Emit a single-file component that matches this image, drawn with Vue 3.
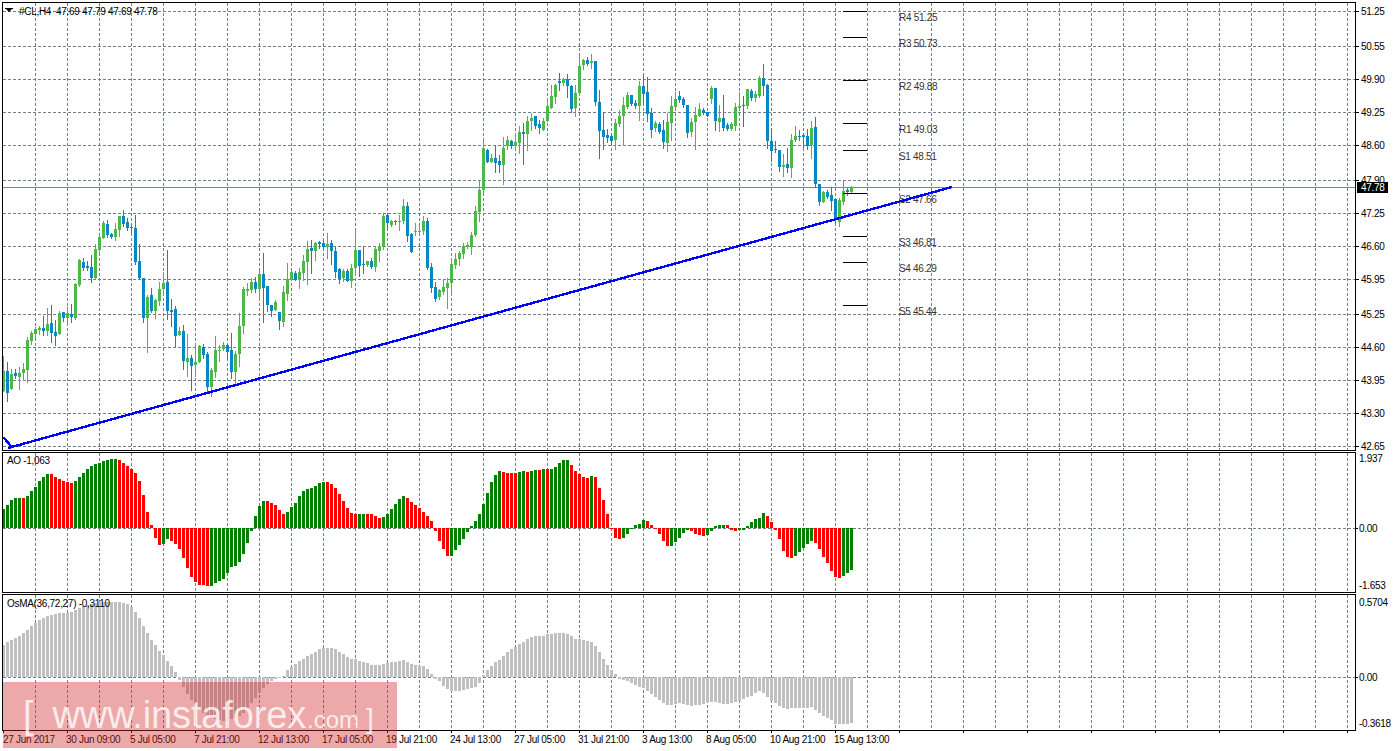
<script setup>
const candleSegments = [
  [205, `g452,498,558,558 b470,498,564,588 g491,507,552,552 b491,504,513,519 g486,504,516,552 g474,492,504,525 g395,405,495,530 g378,384,408,417 g366,372,387,396 g363,369,375,387
b333,369,378,390 g309,357,378,390 b300,354,384,411 b345,381,393,420 g318,324,387,387 b321,321,339,348 g306,324,339,360 b297,327,336,351 g234,237,339,342 g162,165,240,243
b159,171,189,195 b168,183,189,195 b150,186,219,231 g117,132,219,222 g90,96,135,141 g48,54,99,99 b45,57,90,96 b84,87,96,99 g54,72,96,105 g33,33,75,93
b15,33,57,63 b39,51,69,75 b57,66,69,84 b30,69,171,177 b117,168,219,222 b219,219,339,351 g270,276,339,441 b249,270,318,321 g282,285,318,339 g231,252,288,300
g201,234,252,267 b135,231,318,342 b282,315,321,363 b303,312,393,423 g366,378,390,390 b360,378,468,492 g387,459,471,513 b450,459,483,555 g417,471,480,513 g420,423,471,471
b417,426,450,459 b441,447,546,564 g489,495,546,573 g393,435,501,516 g420,435,438,468 g411,420,432,435 b417,420,441,462 b384,435,501,519 g438,447,501,540 g324,363,447,483
g246,252,363,384 g234,252,258,270 g219,231,255,261 b216,231,252,261 g198,207,252,282 b144,207,249,351 b243,243,300,318 b300,300,318,333 g285,291,315,315 b321,321,348,372 g243,261,351,363`],
  [140, `g369,417,462,480 g390,396,420,420 b393,399,420,420 g384,396,420,444 g345,363,399,420 g303,327,366,432 b300,324,333,399 g306,309,333,360 b303,306,312,324
b303,309,320,324 g279,312,320,354 b300,309,333,372 b321,333,396,411 b384,387,417,429 g387,393,414,423 b387,393,423,423 g372,384,423,441 g271,330,384,405 b330,330,378,408
b318,372,375,399 g363,363,375,378 b354,363,381,384 g318,327,381,393 g309,318,333,363 g222,228,321,327 b219,225,249,261 g240,243,255,258 b240,244,247,252 g225,243,246,270
g177,198,243,249 b186,198,288,303 b279,282,336,336 g249,273,276,285 g255,273,276,285 g228,243,273,282 b234,243,384,387 b369,381,444,456 b426,441,477,483 g447,450,471,477
g420,441,456,462 g414,429,444,504 g354,372,429,465 g339,357,375,384 g333,339,357,375 g309,318,342,354 g306,315,321,324 g276,285,321,342 g198,213,285,288 g120,150,216,243
g3,24,150,156 b27,30,66,66 g42,54,66,66 b18,54,69,96 b45,63,75,96 g-10,24,75,132`],
  [40, `g288,300,318,327 b300,303,318,324 g282,306,318,330 g258,276,309,339 b249,276,282,372 g228,243,282,330 g219,234,243,270 b228,228,258,264 b240,252,264,279 g234,243,270,270
g180,198,243,243 g135,168,204,204 g132,135,171,189 b99,123,129,150 g114,117,129,135 b102,117,138,171`],
  [50, `b105,108,177,186 g105,129,174,198 g12,48,129,135 g27,30,45,57 b21,30,42,45 g12,33,39,54 b33,33,156,165 b120,156,243,324 b186,240,261,297 b237,255,264,276
b252,258,273,282 g207,219,270,297 g180,198,222,228 g141,165,198,285 g126,135,171,174 b135,135,162,165 b150,159,168,174 g93,108,168,210 b75,108,132,156 b81,126,192,213
b174,189,240,261 g213,219,234,243 b216,222,246,249 b210,240,276,294 g189,216,279,303 g138,168,219,270 g126,147,171,174 b123,138,150,156 b141,147,165,171 b165,165,249,261
g204,216,246,258 g171,195,216,297 g159,177,198,198 b174,180,189,192 b186,186,198,198 g108,114,147,159 b114,114,213,240 g165,204,216,243 b135,204,234,240 b219,225,237,240
g216,222,237,240 g159,171,228,240 g126,168,174,174 b138,165,168,228 g117,117,168,174 b117,123,144,150 g123,132,144,153 g78,84,138,141 b42,84,108,135 b102,105,273,294
b237,273,303,333 b273,297,300,306 b300,300,351,363 g312,345,351,378 b294,342,354,366 g252,270,354,381 g228,258,270,273 b240,258,261,270 b249,255,261,291 b237,258,288,297
g213,234,285,324 b201,231,402,411 b402,402,456,465 g423,426,456,456 b420,426,441,444 b411,435,453,480 b447,447,510,516 g444,450,516,528 g393,423,456,462 b414,420,426,435 g408,411,426,426`]
]

const candles = candleSegments.flatMap(([off, text]) =>
  text.trim().split(/\s+/).map(token => {
    const [high, top, bottom, low] = token.slice(1).split(',').map(v => Math.round(off + Number(v) / 3))
    return { up: token[0] === 'g', high, top, bottom, low }
  })
).map((c, i) => ({ ...c, x: 2 + 4 * i }))

const aoText = `g192 g180 g165 g159 g159 r159 g153 g138 g126 g108 g96 g87 r87 r96 r102 r108 r111 r114 g108 g96 g84 g72 g63 g57 g54 g48 g45 g42 g42 r45 r54 r63 r72 r84 r108 r150 r201 r240
r278 r300 g297 g282 r288 r297 r312 r339 r369 r396 r411 r420 r420 r423 g423 g414 g408 g402 g384 g366 g363 g351 g327 g294 g258
g213 g183 g168 r168 r174 r180 r195 r207 g201 g186 g174 g153 g138 g132 g129 g123 g114 g111 r111 r117 r129 r147 r168 r189 r204 r207 g207 g207 r207 r207 r213 r219 g216 g207 g192 g177 g162 g153
r159 r171 r180 r189 r201 r213 r228 r258 r288 r312 r333 g333 g315 g300
g282 g261 g243 g228 g207 g177 g144 g111 g90 g78 r81 r84 r84 r84 g81 g78 r81 g78 g75 r75 g72 r72 g72 g66 g54 g45 g45 r60 r78 r87 r96 r99 g93 r96 r129 r165 r207 r252 r279 r282 g279 g267 g252
g240 g237 g225 r228 r240 r252 r267 r288 r303 g303 g291 g279 g264 g255 r258 r267 r270 r273 g270 g258 g243 g240 g240 r240 r255 r258 g255 g255 g243 g231 g222 g219 g204 r213 r231 r255
r282 r318 r336 r339 g333 g321 g309 g297 g288 r294 r312 r336 r354 r378 r396 r399 g393 g384 g375`

const aoBars = aoText.trim().split(/\s+/).map((token, i) => {
  const y = Math.round(445 + Number(token.slice(1)) / 3)
  return { x: 2 + 4 * i, up: token[0] === 'g', y: Math.min(y, 528), h: Math.max(Math.abs(y - 528), 1) }
})

const osmaLeft = [165,156,150,144,138,129,120,108,99,90,84,78,75,72,70,69,69,66,60,54,48,45,42,39,37,36,36,36,36,37,39,42,51,66,84,108,129,150,165,183,195,213,228,246,
  270,292,312,330,345,358,368,376,382,386,390,392,392,388,385,378,368,355,340,325,310,295,282,272,266,264,258,
  240,232,222,213,207,198,192,185,177,174,174,174,178,186,192,201,207,207,213,216,219,225,225,225,222,219,216,216,213,210,216,222,225,228,228,237,252,266,274,288,297,302,303]
const osmaRight = [272,270,267,264,260,250,226,210,198,186,180,168,156,147,140,132,126,117,111,108,108,108,102,102,99,99,99,102,108,117,117,120,123,126,138,156,177,195,210,222,
  236,240,244,250,256,260,264,273,282,291,300,309,315,315,312,309,312,315,318,315,315,312,306,306,306,309,312,312,309,306,303,297,291,288,279,273,279,291,303,309,318,324,327,
  324,324,324,324,324,321,330,339,348,354,360,372,372,372,372,369]

const osmaBars = [
  ...osmaLeft.map(v => 590 + v / 3),
  ...osmaRight.map(v => 600 + v / 3)
].map((raw, i) => {
  const y = Math.round(raw)
  return { x: 2 + 4 * i, y: Math.min(y, 677), h: Math.max(Math.abs(y - 677), 1) }
})

const verticals = Array.from({ length: 42 }, (_, k) => 35 + 32 * k)

const prices = [
  [11, '51.25'], [46, '50.55'], [79, '49.90'], [112, '49.25'], [145, '48.60'], [180, '47.90'], [213, '47.25'],
  [246, '46.60'], [279, '45.95'], [314, '45.25'], [347, '44.60'], [380, '43.95'], [413, '43.30'], [446, '42.65']
]

const pivots = [
  [11, 17, 'R4 51.25'], [37, 43, 'R3 50.73'], [80, 86, 'R2 49.88'], [123, 129, 'R1 49.03'], [150, 156, 'S1 48.51'],
  [193, 199, 'S2 47.66'], [236, 242, 'S3 46.81'], [262, 268, 'S4 46.29'], [305, 311, 'S5 45.44']
]

const dates = ['27 Jun 2017', '30 Jun 09:00', '5 Jul 05:00', '7 Jul 21:00', '12 Jul 13:00', '17 Jul 05:00', '19 Jul 21:00',
  '24 Jul 13:00', '27 Jul 05:00', '31 Jul 21:00', '3 Aug 13:00', '8 Aug 05:00', '10 Aug 21:00', '15 Aug 13:00']
const dateTicks = [3, ...verticals.filter(x => x >= 67 && (x - 67) % 64 === 0)]
const headerText = '#CL,H4  47.69 47.79 47.69 47.78'
</script>

<template>
  <div class="terminal">
    <svg class="pane" width="1395" height="451" viewBox="0 0 1395 451">
      <g class="grid">
        <line v-for="y in prices" :key="y[0]" x1="3" x2="1355" :y1="y[0] + 0.5" :y2="y[0] + 0.5" />
        <line v-for="x in verticals" :key="x" :x1="x + 0.5" :x2="x + 0.5" y1="3" y2="450" />
      </g>
      <line class="last-price" x1="3" x2="1355" y1="187.5" y2="187.5" />
      <g v-for="c in candles" :key="c.x" :class="c.up ? 'bull' : 'bear'">
        <rect :x="c.x + 1" :y="c.high" width="1" :height="c.low - c.high + 1" />
        <rect :x="c.x" :y="c.top" width="3" :height="Math.max(c.bottom - c.top, 1)" />
      </g>
      <g v-for="p in pivots" :key="p[2]">
        <line class="pivot" x1="843" x2="867" :y1="p[0] + 0.5" :y2="p[0] + 0.5" />
        <text class="pivot-label" x="899" :y="p[1] + 4">{{ p[2] }}</text>
      </g>
      <polyline class="trend" points="3,437 12,447" />
      <polyline class="trend" points="8,448 952,187" />
      <polygon class="arrow" points="6,9 12,9 9,12" />
      <line class="arrow-bar" x1="5" x2="13" y1="8.5" y2="8.5" />
      <text class="label header" x="19" y="15">{{ headerText }}</text>
      <g v-for="p in prices" :key="'tick' + p[0]">
        <line class="axis" x1="1355" x2="1359" :y1="p[0] + 0.5" :y2="p[0] + 0.5" />
        <text class="label" x="1361" :y="p[0] + 4">{{ p[1] }}</text>
      </g>
      <rect class="price-box" x="1357" y="182" width="31" height="11" />
      <text class="price-text" x="1361" y="191">47.78</text>
      <rect class="frame" x="2.5" y="2.5" width="1353" height="447.5" />
    </svg>

    <svg class="pane" width="1395" height="142" viewBox="0 451 1395 142">
      <g class="grid">
        <line x1="3" x2="1355" y1="528.5" y2="528.5" />
        <line v-for="x in verticals" :key="x" :x1="x + 0.5" :x2="x + 0.5" y1="453" y2="592" />
      </g>
      <rect v-for="b in aoBars" :key="b.x" :class="b.up ? 'ao-up' : 'ao-down'" :x="b.x" :y="b.y" width="3" :height="b.h" />
      <text class="label" x="7" y="464">AO -1,063</text>
      <line class="axis" x1="1355" x2="1358" y1="528.5" y2="528.5" />
      <text class="label" x="1359" y="462">1.937</text>
      <text class="label" x="1359" y="532">0.00</text>
      <text class="label" x="1359" y="589">-1.653</text>
      <rect class="frame" x="2.5" y="452.5" width="1353" height="140" />
    </svg>

    <svg class="pane" width="1395" height="140" viewBox="0 593 1395 140">
      <g class="grid">
        <line x1="3" x2="1355" y1="677.5" y2="677.5" />
        <line v-for="x in verticals" :key="x" :x1="x + 0.5" :x2="x + 0.5" y1="595" y2="730" />
      </g>
      <rect v-for="b in osmaBars" :key="b.x" class="osma" :x="b.x" :y="b.y" width="3" :height="b.h" />
      <text class="label" x="7" y="607">OsMA(36,72,27) -0,3110</text>
      <line class="axis" x1="1355" x2="1358" y1="677.5" y2="677.5" />
      <text class="label" x="1359" y="606">0.5704</text>
      <text class="label" x="1359" y="681">0.00</text>
      <text class="label" x="1359" y="727">-0.3618</text>
      <rect class="frame" x="2.5" y="594.5" width="1353" height="136" />
      <line v-for="x in dateTicks" :key="'d' + x" class="axis" :x1="x + 0.5" :x2="x + 0.5" y1="730" y2="733" />
    </svg>

    <div class="time-axis">
      <span v-for="d in dates" :key="d">{{ d }}</span>
    </div>

    <div class="watermark">
      <span class="bracket">[</span>
      <span class="site">www.instaforex</span>
      <span class="tld">.com</span>
      <span class="bracket-end">]</span>
    </div>
  </div>
</template>

<style>
html, body {
  margin: 0;
  background: #fff;
}
</style>

<style scoped>
.terminal {
  position: relative;
  display: flex;
  flex-direction: column;
  width: 1395px;
  height: 751px;
  overflow: hidden;
  background: #fff;
  font-family: "Liberation Sans", Arial, sans-serif;
}

.pane {
  display: block;
  flex: none;
}

.grid line {
  stroke: #708090;
  stroke-width: 1;
  stroke-dasharray: 3 2;
  shape-rendering: crispEdges;
}

.last-price {
  stroke: #778899;
  stroke-width: 1;
  shape-rendering: crispEdges;
}

.bull rect {
  fill: #4db848;
  shape-rendering: crispEdges;
}

.bear rect {
  fill: #0787c6;
  shape-rendering: crispEdges;
}

.pivot {
  stroke: #000;
  stroke-width: 1;
  shape-rendering: crispEdges;
}

.pivot-label {
  font-size: 10px;
  letter-spacing: -0.3px;
  fill: #333;
}

.trend {
  fill: none;
  stroke: #0000ff;
  stroke-width: 2.4;
  shape-rendering: crispEdges;
}

.arrow {
  fill: #000;
}

.arrow-bar {
  stroke: #000;
  shape-rendering: crispEdges;
}

.label {
  font-size: 10px;
  letter-spacing: -0.3px;
  fill: #000;
}

.header {
  white-space: pre;
}

.axis {
  stroke: #000;
  stroke-width: 1;
  shape-rendering: crispEdges;
}

.price-box {
  fill: #000;
}

.price-text {
  font-size: 10px;
  letter-spacing: -0.3px;
  fill: #fff;
}

.frame {
  fill: none;
  stroke: #000;
  stroke-width: 1;
  shape-rendering: crispEdges;
}

.ao-up {
  fill: #008000;
  shape-rendering: crispEdges;
}

.ao-down {
  fill: #ff0000;
  shape-rendering: crispEdges;
}

.osma {
  fill: #c0c0c0;
  shape-rendering: crispEdges;
}

.time-axis {
  display: grid;
  grid-template-columns: 63px repeat(13, 64px);
  flex: none;
  height: 18px;
  padding-left: 3px;
  font-size: 10px;
  line-height: 14px;
  letter-spacing: -0.3px;
  color: #000;
}

.time-axis span {
  white-space: nowrap;
}

.watermark {
  position: absolute;
  left: 3px;
  top: 682px;
  display: flex;
  align-items: baseline;
  box-sizing: border-box;
  width: 394px;
  height: 66px;
  padding-left: 20px;
  background: rgba(210, 40, 40, 0.4);
  color: rgba(255, 255, 255, 0.78);
  line-height: 66px;
  white-space: nowrap;
}

.bracket {
  font-size: 38px;
}

.site {
  margin-left: 19px;
  font-size: 38px;
  letter-spacing: -0.15px;
}

.tld {
  margin-left: 1px;
  font-size: 24px;
}

.bracket-end {
  margin-left: 7px;
  font-size: 28px;
}
</style>
